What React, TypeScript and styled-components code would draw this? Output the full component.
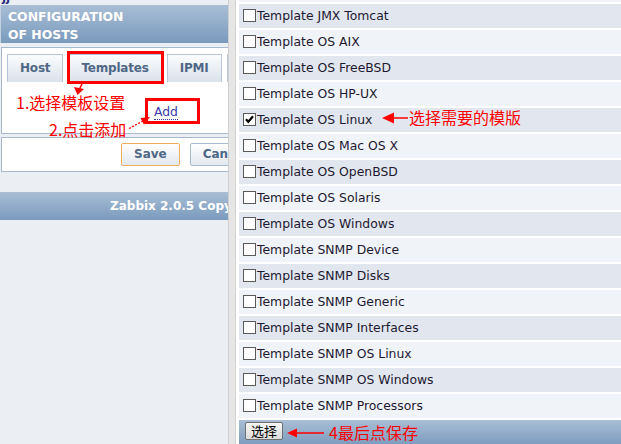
import React from 'react';
import styled, { createGlobalStyle } from 'styled-components';

const GlobalStyle = createGlobalStyle`
  html, body {
    margin: 0;
    padding: 0;
    overflow: hidden;
    background: #ffffff;
  }
  body {
    font-family: 'DejaVu Sans', Verdana, sans-serif;
  }
`;

const Page = styled.div`
  position: relative;
  display: flex;
  width: 621px;
  height: 444px;
  overflow: hidden;
`;

/* ---------- left frame ---------- */

const LeftPane = styled.div`
  flex: none;
  width: 228px;
  height: 100%;
  overflow: hidden;
  background: #ebeef2;
`;

const LeftInner = styled.div`
  width: 300px;
  display: flex;
  flex-direction: column;
`;

const Crumb = styled.div`
  height: 5px;
  overflow: hidden;
  padding-left: 2px;
  font-size: 12px;
  font-weight: 700;
  line-height: 12px;
  color: #2c2c7c;

  span {
    display: block;
    margin-top: -9px;
  }
`;

const Header = styled.div`
  height: 38px;
  box-sizing: border-box;
  padding: 3px 7px 0;
  border-left: 1px solid #c3d1e0;
  background: linear-gradient(#a9bed5, #7a9abd);
  color: #ffffff;
  font-size: 12.4px;
  font-weight: 700;
  line-height: 18px;
`;

const TabBox = styled.div`
  margin: 4px 0 0 1px;
  height: 87px;
  box-sizing: border-box;
  border: 1px solid #a9b9cd;
  background: #ffffff;
  padding: 6px 0 0 5px;
  display: flex;
  flex-direction: column;
`;

const TabRow = styled.div`
  display: flex;
  gap: 5px;
`;

const Tab = styled.div`
  height: 28px;
  box-sizing: border-box;
  padding: 0 12px;
  border: 1px solid #b7c5d6;
  border-bottom: none;
  background: linear-gradient(#fbfcfd, #dae2eb);
  color: #4f6786;
  font-size: 12px;
  font-weight: 700;
  letter-spacing: -0.2px;
  line-height: 27px;
  white-space: nowrap;
`;

const TabContent = styled.div`
  flex: 1;
  padding: 19px 0 0 147px;
`;

const AddLink = styled.span`
  font-size: 12.4px;
  line-height: 16px;
  color: #3a3aa8;
  border-bottom: 1px dotted #3a3aa8;
`;

const ButtonBox = styled.div`
  margin: 3px 0 0 1px;
  height: 35px;
  box-sizing: border-box;
  border: 1px solid #a9b9cd;
  background: #ffffff;
  display: flex;
  align-items: center;
  gap: 10px;
  padding-left: 119px;
`;

const FormButton = styled.div<{ $focused?: boolean }>`
  height: 23px;
  box-sizing: border-box;
  padding: 0 12px;
  border: 1px solid ${({ $focused }) => ($focused ? '#f0ae5c' : '#a9bbd0')};
  border-radius: 2px;
  background: linear-gradient(#ffffff, #e2e8ef);
  color: #4f6786;
  font-size: 12px;
  font-weight: 700;
  line-height: 21px;
  white-space: nowrap;
`;

const Copyright = styled.div`
  margin-top: 20px;
  height: 28px;
  padding-left: 110px;
  overflow: hidden;
  background: linear-gradient(#a9bed5, #7a9abd);
  color: #ffffff;
  font-size: 12px;
  font-weight: 700;
  line-height: 29px;
  white-space: nowrap;
`;

/* ---------- splitter ---------- */

const Splitter = styled.div`
  flex: none;
  width: 8px;
  box-sizing: border-box;
  border-left: 1px solid #cfcfcf;
  border-right: 1px solid #d2d2d2;
  background: #e6e6e6;
`;

/* ---------- right frame ---------- */

const RightPane = styled.div`
  flex: 1;
  min-width: 0;
  padding-left: 3px;
  background: #ffffff;
  overflow: hidden;
`;

const List = styled.div`
  display: flex;
  flex-direction: column;
  gap: 2px;
  margin-top: -22px;
`;

const Row = styled.div<{ $odd: boolean }>`
  height: 24px;
  flex: none;
  display: flex;
  align-items: center;
  padding-left: 4px;
  padding-bottom: 1px;
  box-sizing: border-box;
  background: ${({ $odd }) => ($odd ? '#e2e7ef' : '#f0f4f9')};
  color: #1e1830;
  font-size: 12.4px;
  white-space: nowrap;
`;

const Check = styled.span`
  flex: none;
  width: 13px;
  height: 13px;
  box-sizing: border-box;
  margin-right: 1px;
  border: 1px solid #5a5a5a;
  background: #ffffff;
  display: flex;
  align-items: center;
  justify-content: center;
`;

const BottomBar = styled.div`
  height: 26px;
  flex: none;
  display: flex;
  align-items: flex-start;
  padding: 2px 0 0 6px;
  box-sizing: border-box;
  background: linear-gradient(#a9bed5, #7a9abd);
`;

const SelectButton = styled.div`
  width: 38px;
  height: 18px;
  box-sizing: border-box;
  border: 1px solid #707070;
  border-radius: 2px;
  background: linear-gradient(#f7f7f7, #dcdcdc);
  color: #000000;
  font-family: 'Noto Sans CJK SC', sans-serif;
  font-size: 13px;
  line-height: 16px;
  text-align: center;
`;

/* ---------- red annotations drawn over the screenshot ---------- */

const Mark = styled.div<{ $x: number; $y: number; $w: number; $h: number }>`
  position: absolute;
  left: ${({ $x }) => $x}px;
  top: ${({ $y }) => $y}px;
  width: ${({ $w }) => $w}px;
  height: ${({ $h }) => $h}px;
  box-sizing: border-box;
  border: 3px solid #ff0000;
`;

const Note = styled.div<{ $x: number; $y: number }>`
  position: absolute;
  left: ${({ $x }) => $x}px;
  top: ${({ $y }) => $y}px;
  color: #ff0000;
  font-family: 'Noto Sans CJK SC', sans-serif;
  font-size: 16px;
  line-height: 18px;
  white-space: nowrap;
`;

const Arrows = styled.svg`
  position: absolute;
  left: 0;
  top: 0;
  pointer-events: none;
`;

const templates = [
  'Template JMX Generic',
  'Template JMX Tomcat',
  'Template OS AIX',
  'Template OS FreeBSD',
  'Template OS HP-UX',
  'Template OS Linux',
  'Template OS Mac OS X',
  'Template OS OpenBSD',
  'Template OS Solaris',
  'Template OS Windows',
  'Template SNMP Device',
  'Template SNMP Disks',
  'Template SNMP Generic',
  'Template SNMP Interfaces',
  'Template SNMP OS Linux',
  'Template SNMP OS Windows',
  'Template SNMP Processors',
];

export default function App() {
  return (
    <>
      <GlobalStyle />
      <Page>
        <LeftPane>
          <LeftInner>
            <Crumb>
              <span>jj</span>
            </Crumb>
            <Header>
              CONFIGURATION
              <br />
              OF HOSTS
            </Header>
            <TabBox>
              <TabRow>
                <Tab>Host</Tab>
                <Tab>Templates</Tab>
                <Tab>IPMI</Tab>
                <Tab>Macros</Tab>
              </TabRow>
              <TabContent>
                <AddLink>Add</AddLink>
              </TabContent>
            </TabBox>
            <ButtonBox>
              <FormButton $focused>Save</FormButton>
              <FormButton>Cancel</FormButton>
            </ButtonBox>
            <Copyright>Zabbix 2.0.5 Copyright 2001-2013 by Zabbix SIA</Copyright>
          </LeftInner>
        </LeftPane>

        <Splitter />

        <RightPane>
          <List>
            {templates.map((name, i) => (
              <Row key={name} $odd={i % 2 === 1}>
                <Check>
                  {name === 'Template OS Linux' && (
                    <svg width="11" height="11" viewBox="0 0 11 11">
                      <path d="M2 5.2 L4.3 7.8 L9 2.2" fill="none" stroke="#000" strokeWidth="2.2" />
                    </svg>
                  )}
                </Check>
                {name}
              </Row>
            ))}
            <BottomBar>
              <SelectButton>选择</SelectButton>
            </BottomBar>
          </List>
        </RightPane>

        <Mark $x={67} $y={51} $w={97} $h={33} />
        <Mark $x={145} $y={98} $w={55} $h={26} />
        <Note $x={16} $y={93}>1.选择模板设置</Note>
        <Note $x={49} $y={120}>2.点击添加</Note>
        <Note $x={409} $y={108}>选择需要的模版</Note>
        <Note $x={329} $y={423}>4最后点保存</Note>

        <Arrows width="621" height="444" viewBox="0 0 621 444">
          <line x1="82" y1="84" x2="79.5" y2="89" stroke="#ff0000" strokeWidth="1.5" />
          <polygon points="74,87 84,89 77.5,95" fill="#ff0000" />
          <line x1="129" y1="128.5" x2="143" y2="121" stroke="#ff0000" strokeWidth="1.3" strokeDasharray="2 1.5" />
          <polygon points="150,117 140.5,118 144,124.8" fill="#ff0000" />
          <line x1="393" y1="118" x2="408" y2="118" stroke="#ff0000" strokeWidth="1.5" />
          <polygon points="382,118 394,112.5 394,123.5" fill="#ff0000" />
          <line x1="296" y1="433" x2="324" y2="433" stroke="#ff0000" strokeWidth="1.5" />
          <polygon points="287,433 297,428.5 297,437.5" fill="#ff0000" />
        </Arrows>
      </Page>
    </>
  );
}
